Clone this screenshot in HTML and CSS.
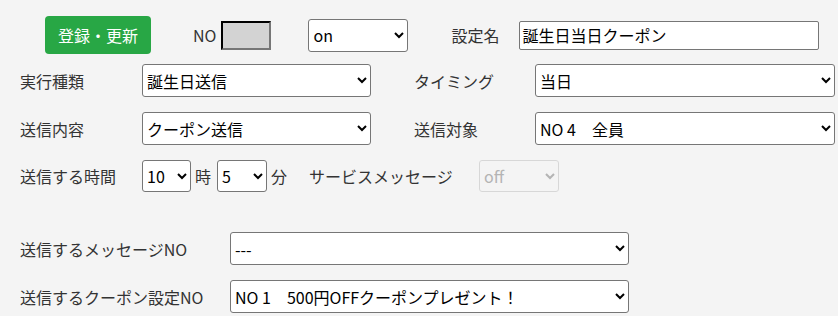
FILE: index.html
```html
<!DOCTYPE html>
<html lang="ja">
<head>
    <meta charset="UTF-8">
    <title>配信設定</title>
    <link rel="stylesheet" href="styles.css">
</head>
<body>
    <form class="settei">
        <div class="top">
            <button type="button" class="touroku">登録・更新</button>
            <span class="no-label">NO</span>
            <input type="text" class="no-box" readonly>
            <select class="onoff">
                <option>on</option>
                <option>off</option>
            </select>
            <span class="name-label">設定名</span>
            <input type="text" class="name-box" value="誕生日当日クーポン">
        </div>

        <div class="grid">
            <label>実行種類</label>
            <select><option>誕生日送信</option></select>
            <label class="migi">タイミング</label>
            <select><option>当日</option></select>

            <label>送信内容</label>
            <select><option>クーポン送信</option></select>
            <label class="migi">送信対象</label>
            <select><option>NO 4　全員</option></select>
        </div>

        <div class="jikan">
            <label class="jikan-label">送信する時間</label>
            <select class="small"><option>10</option></select>
            <span class="tani">時</span>
            <select class="small"><option>5</option></select>
            <span class="tani">分</span>
            <label class="service">サービスメッセージ</label>
            <select class="small off" disabled><option>off</option></select>
        </div>

        <div class="grid2">
            <label>送信するメッセージNO</label>
            <select><option>---</option></select>
            <label>送信するクーポン設定NO</label>
            <select><option>NO 1　500円OFFクーポンプレゼント！</option></select>
        </div>
    </form>
</body>
</html>
```
FILE: styles.css
```css
body {
    margin: 0;
    background-color: #f4f4f4;
    font-family: "Noto Sans CJK JP", "Noto Sans", sans-serif;
    font-size: 16px;
    color: #333;
}

select, input, button {
    font-family: "Noto Sans CJK JP", "Noto Sans", sans-serif;
    font-size: 16px;
    box-sizing: border-box;
}

select {
    height: 33px;
    background-color: white;
    color: black;
    border: 1px solid #767676;
    border-radius: 3px;
    padding: 0;
}

.settei {
    padding: 16px 0 0 20px;
}

.top {
    display: flex;
    align-items: center;
    height: 38px;
    padding-left: 25px;
}

.touroku {
    width: 106px;
    height: 38px;
    background-color: #28a745;
    color: white;
    border: none;
    border-radius: 4px;
    padding: 0;
}

.no-label {
    margin-left: 42px;
    margin-right: 5px;
}

.no-box {
    width: 50px;
    height: 29px;
    background-color: lightgrey;
    border: 2px inset #767676;
    border-top-color: #222;
    border-left-color: #222;
}

.onoff {
    width: 100px;
    margin-left: 37px;
}

.name-label {
    margin-left: 43px;
    width: 68px;
}

.name-box {
    width: 300px;
    height: 29px;
    background-color: white;
    border: 1px solid #767676;
    border-radius: 2px;
    padding: 0 2px;
    color: black;
}

.grid {
    display: grid;
    grid-template-columns: 122px 229px 43px 121px 300px;
    row-gap: 15px;
    align-items: center;
    margin-top: 10px;
}

.grid .migi {
    grid-column: 4;
}

.jikan {
    display: flex;
    align-items: center;
    margin-top: 15px;
}

.jikan-label {
    width: 122px;
}

.small {
    width: 49px;
    height: 32px;
}

.tani {
    margin: 0 6px 0 4px;
}

.jikan .tani + .small {
    width: 50px;
}

.service {
    margin-left: 16px;
    width: 170px;
}

.off {
    width: 80px;
    background-color: #f4f4f4;
    color: #999;
    border-color: #ccc;
}

.grid2 {
    display: grid;
    grid-template-columns: 210px 399px;
    row-gap: 15px;
    align-items: center;
    margin-top: 40px;
}
```
